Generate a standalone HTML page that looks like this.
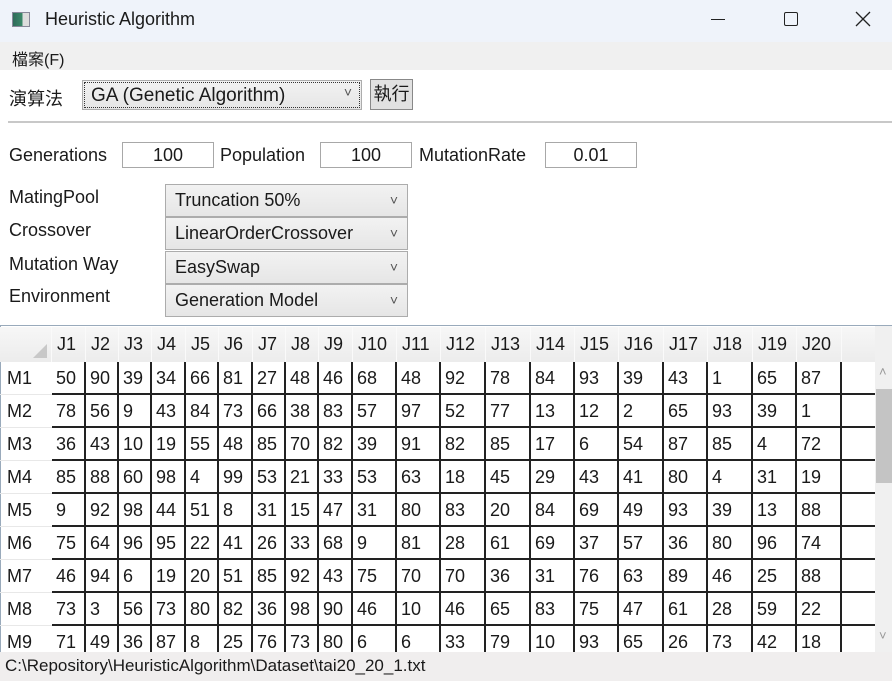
<!DOCTYPE html>
<html><head><meta charset="utf-8"><style>
*{box-sizing:border-box;margin:0;padding:0}
body{width:892px;height:681px;overflow:hidden;background:#fff;font-family:"Liberation Sans","Noto Sans CJK TC",sans-serif;font-size:18px;color:#1a1a1a;position:relative}
.a{position:absolute;white-space:nowrap}
.title{left:0;top:0;width:892px;height:42px;background:#eff3fa}
.menu{left:0;top:42px;width:892px;height:28px;background:#f0f0f0}
.inp{position:absolute;border:1px solid #a8a8a8;background:#fff;text-align:center;height:26px;line-height:25px}
.cb{position:absolute;left:165px;width:243px;height:33px;border:1px solid #acacac;background:linear-gradient(#f2f2f2,#e6e6e6);padding-left:9px;line-height:31px}
.cb:after{content:"˅";position:absolute;right:9px;top:0;font-size:14px;color:#555}
.row{position:absolute;left:0;display:flex;height:33px}
.row span{display:block;height:33px;border-right:2px solid #222;border-bottom:2px solid #222;padding-left:4px;line-height:33px}
.row span:first-child{border-right:none;border-bottom:1px solid #e8e8e8;padding-left:7px}
.hd{position:absolute;left:0;top:327px;display:flex;height:35px;background:#f0f0f0}
.hd span{display:block;height:35px;border-right:1px solid #fafafa;padding-left:5px;line-height:35px;background:linear-gradient(#f7f7f7,#ececec)}
</style></head><body>
<div class="a title"></div>
<div class="a" style="left:12px;top:12px;width:18px;height:15px;border:1px solid #889;background:linear-gradient(90deg,#2f6b5a 0,#3c8a6a 60%,#ddd 60%)"></div>
<div class="a" style="left:45px;top:9px;font-size:18px">Heuristic Algorithm</div>
<div class="a" style="left:711px;top:19px;width:14px;height:1px;background:#222"></div>
<div class="a" style="left:784px;top:12px;width:14px;height:14px;border:1.5px solid #222;border-radius:2px"></div>
<svg class="a" style="left:855px;top:11px" width="16" height="16"><path d="M1 1L15 15M15 1L1 15" stroke="#222" stroke-width="1.3"/></svg>
<div class="a menu"></div>
<div class="a" style="left:12px;top:46px;font-size:16px">檔案(F)</div>
<div class="a" style="left:9px;top:85px">演算法</div>
<div class="a" style="left:82px;top:80px;width:280px;height:30px;border:1px solid #acacac;background:linear-gradient(#f2f2f2,#e6e6e6)"><div style="position:absolute;inset:1px;border:1px dotted #333"></div><span style="position:absolute;left:8px;top:4px;font-size:19px">GA (Genetic Algorithm)</span><span style="position:absolute;right:9px;top:3px;font-size:14px;color:#555">˅</span></div>
<div class="a" style="left:370px;top:79px;width:43px;height:31px;border:1px solid #888;background:#e1e1e1;text-align:center;line-height:29px">執行</div>
<div class="a" style="left:8px;top:121px;width:884px;height:2px;background:#c8c8c8"></div>
<div class="a" style="left:9px;top:145px">Generations</div>
<div class="inp" style="left:122px;top:142px;width:92px">100</div>
<div class="a" style="left:220px;top:145px">Population</div>
<div class="inp" style="left:320px;top:142px;width:92px">100</div>
<div class="a" style="left:419px;top:145px">MutationRate</div>
<div class="inp" style="left:545px;top:142px;width:92px">0.01</div>
<div class="a" style="left:9px;top:187px">MatingPool</div>
<div class="a" style="left:9px;top:220px">Crossover</div>
<div class="a" style="left:9px;top:254px">Mutation Way</div>
<div class="a" style="left:9px;top:286px">Environment</div>
<div class="cb" style="top:184px">Truncation 50%</div>
<div class="cb" style="top:217px">LinearOrderCrossover</div>
<div class="cb" style="top:251px">EasySwap</div>
<div class="cb" style="top:284px">Generation Model</div>
<div class="a" style="left:0;top:325px;width:892px;height:1px;background:#9ab"></div>
<div class="a" style="left:0;top:325px;width:1px;height:330px;background:#9ab"></div>
<div class="hd"><span style="width:52px;position:relative"><i style="position:absolute;right:4px;bottom:4px;width:0;height:0;border-left:14px solid transparent;border-bottom:14px solid #c8c8c8"></i></span><span style="width:34px">J1</span><span style="width:33px">J2</span><span style="width:33px">J3</span><span style="width:34px">J4</span><span style="width:33px">J5</span><span style="width:34px">J6</span><span style="width:33px">J7</span><span style="width:33px">J8</span><span style="width:34px">J9</span><span style="width:44px">J10</span><span style="width:44px">J11</span><span style="width:45px">J12</span><span style="width:45px">J13</span><span style="width:44px">J14</span><span style="width:44px">J15</span><span style="width:45px">J16</span><span style="width:44px">J17</span><span style="width:45px">J18</span><span style="width:44px">J19</span><span style="width:45px">J20</span><span style="width:35px"></span></div>
<div style="position:absolute;left:0;top:362px;width:875px;height:290px;overflow:hidden">
<style>.w1{width:34px}.w2{width:33px}.w3{width:44px}.w4{width:45px}</style>
<div class="row" style="top:0"><span style="width:52px">M1</span><span class="w1">50</span><span class="w2">90</span><span class="w2">39</span><span class="w1">34</span><span class="w2">66</span><span class="w1">81</span><span class="w2">27</span><span class="w2">48</span><span class="w1">46</span><span class="w3">68</span><span class="w3">48</span><span class="w4">92</span><span class="w4">78</span><span class="w3">84</span><span class="w3">93</span><span class="w4">39</span><span class="w3">43</span><span class="w4">1</span><span class="w3">65</span><span class="w4">87</span><span style="width:33px;border-right:none"></span></div>
<div class="row" style="top:33px"><span style="width:52px">M2</span><span class="w1">78</span><span class="w2">56</span><span class="w2">9</span><span class="w1">43</span><span class="w2">84</span><span class="w1">73</span><span class="w2">66</span><span class="w2">38</span><span class="w1">83</span><span class="w3">57</span><span class="w3">97</span><span class="w4">52</span><span class="w4">77</span><span class="w3">13</span><span class="w3">12</span><span class="w4">2</span><span class="w3">65</span><span class="w4">93</span><span class="w3">39</span><span class="w4">1</span><span style="width:33px;border-right:none"></span></div>
<div class="row" style="top:66px"><span style="width:52px">M3</span><span class="w1">36</span><span class="w2">43</span><span class="w2">10</span><span class="w1">19</span><span class="w2">55</span><span class="w1">48</span><span class="w2">85</span><span class="w2">70</span><span class="w1">82</span><span class="w3">39</span><span class="w3">91</span><span class="w4">82</span><span class="w4">85</span><span class="w3">17</span><span class="w3">6</span><span class="w4">54</span><span class="w3">87</span><span class="w4">85</span><span class="w3">4</span><span class="w4">72</span><span style="width:33px;border-right:none"></span></div>
<div class="row" style="top:99px"><span style="width:52px">M4</span><span class="w1">85</span><span class="w2">88</span><span class="w2">60</span><span class="w1">98</span><span class="w2">4</span><span class="w1">99</span><span class="w2">53</span><span class="w2">21</span><span class="w1">33</span><span class="w3">53</span><span class="w3">63</span><span class="w4">18</span><span class="w4">45</span><span class="w3">29</span><span class="w3">43</span><span class="w4">41</span><span class="w3">80</span><span class="w4">4</span><span class="w3">31</span><span class="w4">19</span><span style="width:33px;border-right:none"></span></div>
<div class="row" style="top:132px"><span style="width:52px">M5</span><span class="w1">9</span><span class="w2">92</span><span class="w2">98</span><span class="w1">44</span><span class="w2">51</span><span class="w1">8</span><span class="w2">31</span><span class="w2">15</span><span class="w1">47</span><span class="w3">31</span><span class="w3">80</span><span class="w4">83</span><span class="w4">20</span><span class="w3">84</span><span class="w3">69</span><span class="w4">49</span><span class="w3">93</span><span class="w4">39</span><span class="w3">13</span><span class="w4">88</span><span style="width:33px;border-right:none"></span></div>
<div class="row" style="top:165px"><span style="width:52px">M6</span><span class="w1">75</span><span class="w2">64</span><span class="w2">96</span><span class="w1">95</span><span class="w2">22</span><span class="w1">41</span><span class="w2">26</span><span class="w2">33</span><span class="w1">68</span><span class="w3">9</span><span class="w3">81</span><span class="w4">28</span><span class="w4">61</span><span class="w3">69</span><span class="w3">37</span><span class="w4">57</span><span class="w3">36</span><span class="w4">80</span><span class="w3">96</span><span class="w4">74</span><span style="width:33px;border-right:none"></span></div>
<div class="row" style="top:198px"><span style="width:52px">M7</span><span class="w1">46</span><span class="w2">94</span><span class="w2">6</span><span class="w1">19</span><span class="w2">20</span><span class="w1">51</span><span class="w2">85</span><span class="w2">92</span><span class="w1">43</span><span class="w3">75</span><span class="w3">70</span><span class="w4">70</span><span class="w4">36</span><span class="w3">31</span><span class="w3">76</span><span class="w4">63</span><span class="w3">89</span><span class="w4">46</span><span class="w3">25</span><span class="w4">88</span><span style="width:33px;border-right:none"></span></div>
<div class="row" style="top:231px"><span style="width:52px">M8</span><span class="w1">73</span><span class="w2">3</span><span class="w2">56</span><span class="w1">73</span><span class="w2">80</span><span class="w1">82</span><span class="w2">36</span><span class="w2">98</span><span class="w1">90</span><span class="w3">46</span><span class="w3">10</span><span class="w4">46</span><span class="w4">65</span><span class="w3">83</span><span class="w3">75</span><span class="w4">47</span><span class="w3">61</span><span class="w4">28</span><span class="w3">59</span><span class="w4">22</span><span style="width:33px;border-right:none"></span></div>
<div class="row" style="top:264px"><span style="width:52px">M9</span><span class="w1">71</span><span class="w2">49</span><span class="w2">36</span><span class="w1">87</span><span class="w2">8</span><span class="w1">25</span><span class="w2">76</span><span class="w2">73</span><span class="w1">80</span><span class="w3">6</span><span class="w3">6</span><span class="w4">33</span><span class="w4">79</span><span class="w3">10</span><span class="w3">93</span><span class="w4">65</span><span class="w3">26</span><span class="w4">73</span><span class="w3">42</span><span class="w4">18</span><span style="width:33px;border-right:none"></span></div>
</div>
<div class="a" style="left:875px;top:326px;width:17px;height:326px;background:#f0f0f0"></div>
<div class="a" style="left:876px;top:389px;width:16px;height:94px;background:#c4c4c4"></div>
<div class="a" style="left:879px;top:364px;font-size:13px;color:#999">˄</div>
<div class="a" style="left:879px;top:628px;font-size:13px;color:#999">˅</div>
<div class="a" style="left:0;top:652px;width:892px;height:29px;background:#f0eeee"></div>
<div class="a" style="left:5px;top:656px;font-size:17px">C:\Repository\HeuristicAlgorithm\Dataset\tai20_20_1.txt</div>
</body></html>
